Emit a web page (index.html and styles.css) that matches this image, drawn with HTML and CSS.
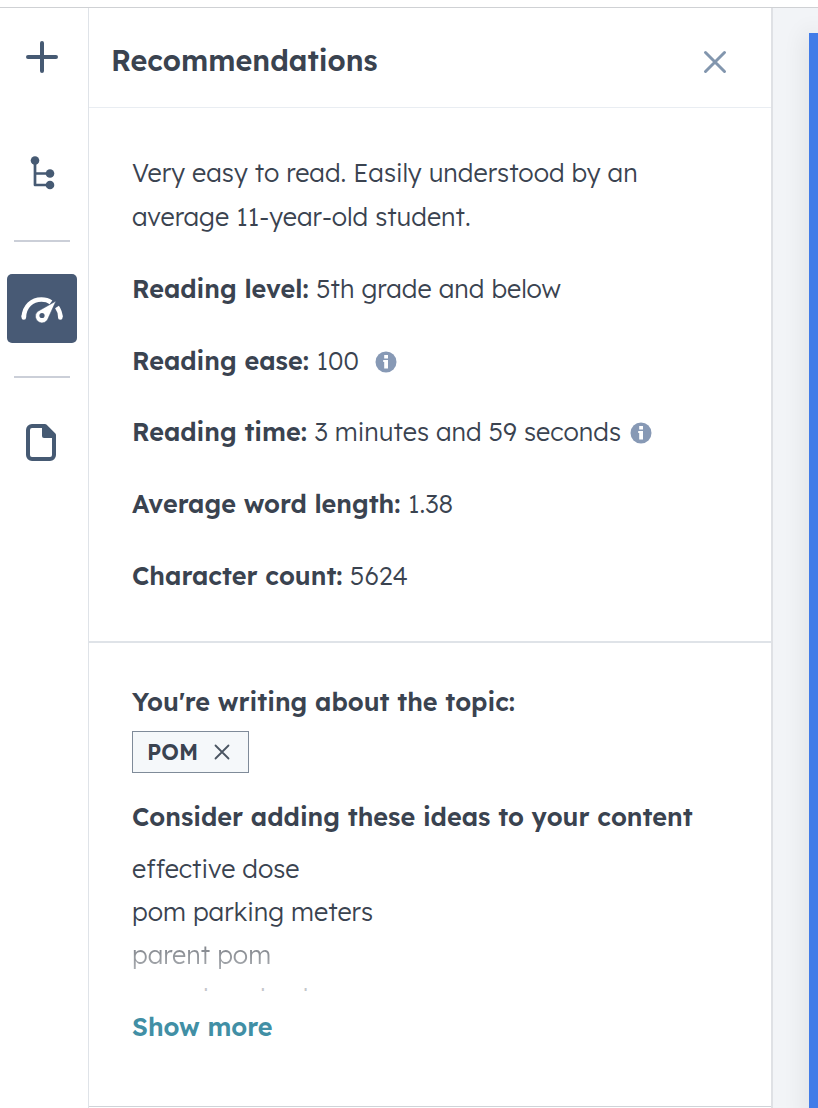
FILE: index.html
```html
<!DOCTYPE html>
<html lang="en">
<head>
  <meta charset="UTF-8" />
  <meta name="viewport" content="width=device-width, initial-scale=1.0"/>
  <title>Recommendations</title>
  <link rel="stylesheet" href="styles.css">
</head>
<body>

<div class="editor">

  <!-- TOOLBAR -->
  <nav class="toolbar">
    <a href="#" class="tool tool-add" aria-label="Add">
      <svg width="34" height="34" viewBox="0 0 34 34"><path d="M17 3v28M3 17h28" stroke="#465a73" stroke-width="4" stroke-linecap="round"/></svg>
    </a>
    <a href="#" class="tool tool-tree" aria-label="Contents">
      <svg width="26" height="34" viewBox="0 0 26 34" fill="#465a73">
        <path d="M6 5v24h15M6 17.500h15" fill="none" stroke="#465a73" stroke-width="2.700" stroke-linejoin="round"/>
        <circle cx="6" cy="4.500" r="4.300"/><circle cx="21" cy="17.500" r="4.300"/><circle cx="21" cy="29" r="4.300"/>
      </svg>
    </a>
    <hr>
    <a href="#" class="tool tool-gauge" aria-label="Optimize">
      <svg width="42" height="28" viewBox="0 0 42 28">
        <path d="M2.800 22C3.500 11 11 4.500 20.500 4.500c4 0 7 1 9.500 2.800" fill="none" stroke="#fff" stroke-width="4.600"/>
        <path d="M2.800 21v1.500M39.300 21v1.500" stroke="#fff" stroke-width="4.600" stroke-linecap="round"/>
        <path d="M36 12c2.200 3.200 3.300 6.500 3.300 10" fill="none" stroke="#fff" stroke-width="4.600"/>
        <path d="M35 6 27.500 22.500a6.600 6.600 0 1 1-11-6z" fill="#fff" stroke="#485a75" stroke-width=".6"/>
        <circle cx="21" cy="20.500" r="2.600" fill="#485a75"/>
      </svg>
    </a>
    <hr>
    <a href="#" class="tool tool-page" aria-label="Page">
      <svg width="30" height="37" viewBox="0 0 30 37">
        <path d="M6 2h13l9 9v20a4 4 0 0 1-4 4H6a4 4 0 0 1-4-4V6a4 4 0 0 1 4-4z" fill="none" stroke="#465a73" stroke-width="4" stroke-linejoin="round"/>
        <path d="M16 1h4l9 9v4H18a2 2 0 0 1-2-2z" fill="#465a73"/>
      </svg>
    </a>
  </nav>

  <!-- RECOMMENDATIONS PANEL -->
  <main class="panel">
    <header>
      <h2>Recommendations</h2>
      <button class="close" aria-label="Close">
        <svg width="24" height="24" viewBox="0 0 24 24"><path d="M2.500 2.500l19 19M21.500 2.500l-19 19" stroke="#8296ae" stroke-width="3" stroke-linecap="round"/></svg>
      </button>
    </header>

    <section class="stats">
      <p>Very easy to read. Easily understood by an<br>average 11-year-old student.</p>
      <p><strong>Reading level:</strong> 5th grade and below</p>
      <p><strong>Reading ease:</strong> <span class="ease">100</span>
        <svg class="info" width="22" height="22" viewBox="0 0 22 22"><circle cx="11" cy="11" r="10.500" fill="#8799b5"/><path d="M9.200 4h3.800v3.500H9.200zM8.200 9H13v8.500H9.200V11h-1z" fill="#fff"/></svg>
      </p>
      <p><strong>Reading time:</strong> 3 minutes and 59 seconds
        <svg class="info" width="22" height="22" viewBox="0 0 22 22"><circle cx="11" cy="11" r="10.500" fill="#8799b5"/><path d="M9.200 4h3.800v3.500H9.200zM8.200 9H13v8.500H9.200V11h-1z" fill="#fff"/></svg>
      </p>
      <p><strong>Average word length:</strong> 1.38</p>
      <p><strong>Character count:</strong> 5624</p>
    </section>

    <section class="topics">
      <h3>You're writing about the topic:</h3>
      <div class="tag">
        <span>POM</span>
        <svg width="16" height="16" viewBox="0 0 16 16"><path d="M1.500 1.500l13 13M14.500 1.500l-13 13" stroke="#4a5562" stroke-width="1.800" stroke-linecap="round"/></svg>
      </div>
      <h3>Consider adding these ideas to your content</h3>
      <ul class="ideas">
        <li>effective dose</li>
        <li>pom parking meters</li>
        <li class="fading">parent pom</li>
        <li class="faded">pom dosed gel</li>
      </ul>
      <a href="#" class="more">Show more</a>
    </section>
  </main>

  <!-- PAGE PREVIEW -->
  <aside class="preview">
    <div class="preview-page"></div>
  </aside>

</div>

</body>
</html>
```

FILE: styles.css
```css
* {
  box-sizing: border-box;
}
body {
  margin: 0;
  padding-top: 7px;
  height: 1108px;
  overflow: hidden;
  font-family: "Lexend Deca", Lexend, Inter, sans-serif;
  font-size: 25.2px;
  font-weight: 300;
  color: #3a4350;
  background: #fff;
}
.editor {
  display: flex;
  height: 1101px;
  border-top: 1px solid #cfd1d4;
}

/* Toolbar */
.toolbar {
  width: 89px;
  flex: none;
  display: flex;
  flex-direction: column;
  align-items: center;
  padding-right: 5px;
  border-right: 1px solid #dfe3e8;
}
.tool {
  display: flex;
  align-items: center;
  justify-content: center;
}
.tool-add {
  margin-top: 32px;
}
.tool-tree {
  margin-top: 82px;
  margin-bottom: 50px;
}
.toolbar hr {
  width: 56px;
  height: 2px;
  margin: 0;
  border: 0;
  background: #cbcfd8;
}
.tool-gauge {
  width: 70px;
  height: 69px;
  margin: 32px 0 33px;
  border-radius: 5px;
  background: #485a75;
}
.tool-page {
  margin-top: 46px;
  margin-right: 2px;
}

/* Panel */
.panel {
  width: 682px;
  flex: none;
  height: 1099px;
  border-bottom: 1px solid #cfd3d8;
}
header {
  height: 100px;
  display: flex;
  justify-content: space-between;
  align-items: center;
  padding: 5px 44px 0 22px;
  border-bottom: 1px solid #e9edf2;
}
h2 {
  margin: 0;
  font-size: 28.7px;
  font-weight: 600;
  line-height: 40px;
}
.close {
  display: flex;
  margin-top: 4px;
  padding: 0;
  border: 0;
  background: none;
  cursor: pointer;
}
.stats {
  height: 535px;
  padding: 43px 0 0 43px;
  border-bottom: 2px solid #dfe3e8;
}
.stats p {
  height: 44px;
  margin: 0 0 27.8px;
  line-height: 44px;
  white-space: nowrap;
}
.stats p:first-child {
  height: 88px;
}
strong, h3 {
  font-weight: 600;
}
strong {
  margin-right: 0.5px;
}
.info {
  margin-left: 1.5px;
  vertical-align: -3px;
}
.ease {
  margin-right: 7.5px;
}

/* Topics */
.topics {
  padding: 37px 0 0 43px;
}
h3 {
  margin: 0;
  font-size: 25.2px;
  line-height: 44px;
  white-space: nowrap;
}
.tag {
  width: 117px;
  height: 42px;
  margin: 7px 0 22px;
  padding: 0 18px 0 14px;
  display: flex;
  align-items: center;
  justify-content: space-between;
  border: 1px solid #7f8b99;
  background: #f5f8fa;
  font-size: 22px;
  font-weight: 600;
}
.ideas {
  height: 144px;
  margin: 8px 0 0;
  padding: 0;
  overflow: hidden;
  list-style: none;
}
.ideas li {
  height: 43px;
  line-height: 43px;
}
.ideas .fading {
  color: transparent;
  background: linear-gradient(#6c7077, #b4b7bb);
  -webkit-background-clip: text;
  background-clip: text;
}
.ideas .faded {
  color: #c4c7ca;
}
.more {
  display: block;
  margin-top: 14px;
  line-height: 44px;
  font-weight: 600;
  color: #418fa5;
  text-decoration: none;
}

/* Preview */
.preview {
  flex: 1;
  padding-top: 25px;
  overflow: hidden;
  border-left: 2px solid #dfe1e5;
  background: #f2f4f7;
}
.preview-page {
  height: 1090px;
  margin-left: 36px;
  background: #427ce8;
  box-shadow: 0 0 24px rgba(0, 0, 0, 0.16);
}
```
